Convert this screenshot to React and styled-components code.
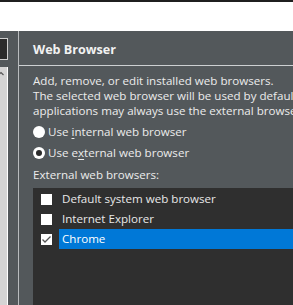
import React from "react";
import styled, { createGlobalStyle } from "styled-components";

const GlobalStyle = createGlobalStyle`
  html, body {
    margin: 0;
    padding: 0;
    background: #ffffff;
  }
  body {
    font-family: "Open Sans", "Noto Sans", sans-serif;
    font-size: 11.6px;
  }
`;

const Page = styled.div`
  width: 293px;
  height: 305px;
  overflow: hidden;
  display: flex;
  flex-direction: column;
  background: #ffffff;
`;

const TopEdge = styled.div`
  height: 2px;
  background: #1f1f1f;
  flex-shrink: 0;
`;

const WhiteStrip = styled.div`
  height: 29px;
  background: #ffffff;
  flex-shrink: 0;
`;

const Workbench = styled.div`
  flex: 1;
  display: flex;
  background: #53585b;
  min-height: 0;
`;

const LeftPane = styled.div`
  width: 18px;
  flex-shrink: 0;
  display: flex;
  flex-direction: column;
  padding: 7px 10px 0 0;
  box-sizing: border-box;
  gap: 7px;
`;

const FilterBox = styled.div`
  height: 22px;
  background: #2b2b2b;
  border: 1px solid #cfcfcf;
  border-left: none;
  box-sizing: border-box;
`;

const Tree = styled.div`
  flex: 1;
  background: #d4d4d4;
  border-right: 1px solid #ffffff;
  padding-top: 4px;
  overflow: hidden;
`;

const Sash = styled.div`
  width: 1px;
  background: #b9bcbe;
  flex-shrink: 0;
`;

const Panel = styled.div`
  flex: 1;
  display: flex;
  flex-direction: column;
  min-width: 0;
`;

const Header = styled.div`
  height: 35px;
  display: flex;
  align-items: center;
  padding: 3px 0 0 14px;
  box-sizing: border-box;
  border-bottom: 1px solid #cdd0d2;
  color: #f2f2f2;
  font-weight: 700;
  font-size: 12.6px;
  white-space: nowrap;
  flex-shrink: 0;
`;

const Body = styled.div`
  flex: 1;
  padding: 7px 0 0 14px;
  color: #ececec;
  white-space: nowrap;
  display: flex;
  flex-direction: column;
  min-width: 0;
`;

const Line = styled.div`
  line-height: 15px;
  margin-top: ${(p) => p.$gap || 0}px;
`;

const RadioRow = styled.div`
  height: 21px;
  display: flex;
  align-items: center;
  gap: 3px;
  margin-top: ${(p) => p.$gap || 0}px;
`;

const RadioDot = styled.span`
  width: 12px;
  height: 12px;
  border-radius: 50%;
  background: #ffffff;
  display: flex;
  align-items: center;
  justify-content: center;
  margin-top: 1px;
  &::after {
    content: "";
    width: 6px;
    height: 6px;
    border-radius: 50%;
    background: ${(p) => (p.$checked ? "#2b2b2b" : "transparent")};
  }
`;

const Key = styled.u`
  text-decoration-thickness: 1px;
  text-underline-offset: 2px;
`;

const List = styled.div`
  flex: 1;
  margin-top: 6px;
  background: #2f2f2f;
  padding-top: 1px;
  color: #e8e8e8;
`;

const Item = styled.div`
  height: 20px;
  display: flex;
  align-items: center;
  padding-left: 8px;
`;

const Box = styled.span`
  width: 11px;
  height: 11px;
  background: #ffffff;
  flex-shrink: 0;
  display: flex;
  margin-right: 7px;
`;

const Label = styled.span`
  flex: 1;
  height: 20px;
  line-height: 20px;
  padding-left: 3px;
  background: ${(p) => (p.$selected ? "#0078d7" : "transparent")};
  color: ${(p) => (p.$selected ? "#ffffff" : "inherit")};
`;

const browsers = [
  { name: "Default system web browser", checked: false },
  { name: "Internet Explorer", checked: false },
  { name: "Chrome", checked: true, selected: true },
];

export default function App() {
  return (
    <Page>
      <GlobalStyle />
      <TopEdge />
      <WhiteStrip />
      <Workbench>
        <LeftPane>
          <FilterBox />
          <Tree>
            <svg width="6" height="5" viewBox="0 0 6 5" style={{ marginLeft: -2, display: "block" }}>
              <polyline points="0.5,4 3,1.5 5.5,4" fill="none" stroke="#555" strokeWidth="1.2" />
            </svg>
          </Tree>
        </LeftPane>
        <Sash />
        <Panel>
          <Header>Web Browser</Header>
          <Body>
            <Line>Add, remove, or edit installed web browsers.</Line>
            <Line>
              The selected web browser will be used by default when web pages are opened, although some
            </Line>
            <Line>applications may always use the external browser.</Line>
            <RadioRow $gap={3}>
              <RadioDot />
              <span>
                Use <Key>i</Key>nternal web browser
              </span>
            </RadioRow>
            <RadioRow>
              <RadioDot $checked />
              <span>
                Use e<Key>x</Key>ternal web browser
              </span>
            </RadioRow>
            <Line $gap={4}>External web browsers:</Line>
            <List>
              {browsers.map((b) => (
                <Item key={b.name}>
                  <Box>
                    {b.checked && (
                      <svg width="11" height="11" viewBox="0 0 11 11">
                        <polyline
                          points="1.5,5.5 4,8 9.5,2.5"
                          fill="none"
                          stroke="#555"
                          strokeWidth="1.3"
                        />
                      </svg>
                    )}
                  </Box>
                  <Label $selected={b.selected}>{b.name}</Label>
                </Item>
              ))}
            </List>
          </Body>
        </Panel>
      </Workbench>
    </Page>
  );
}
